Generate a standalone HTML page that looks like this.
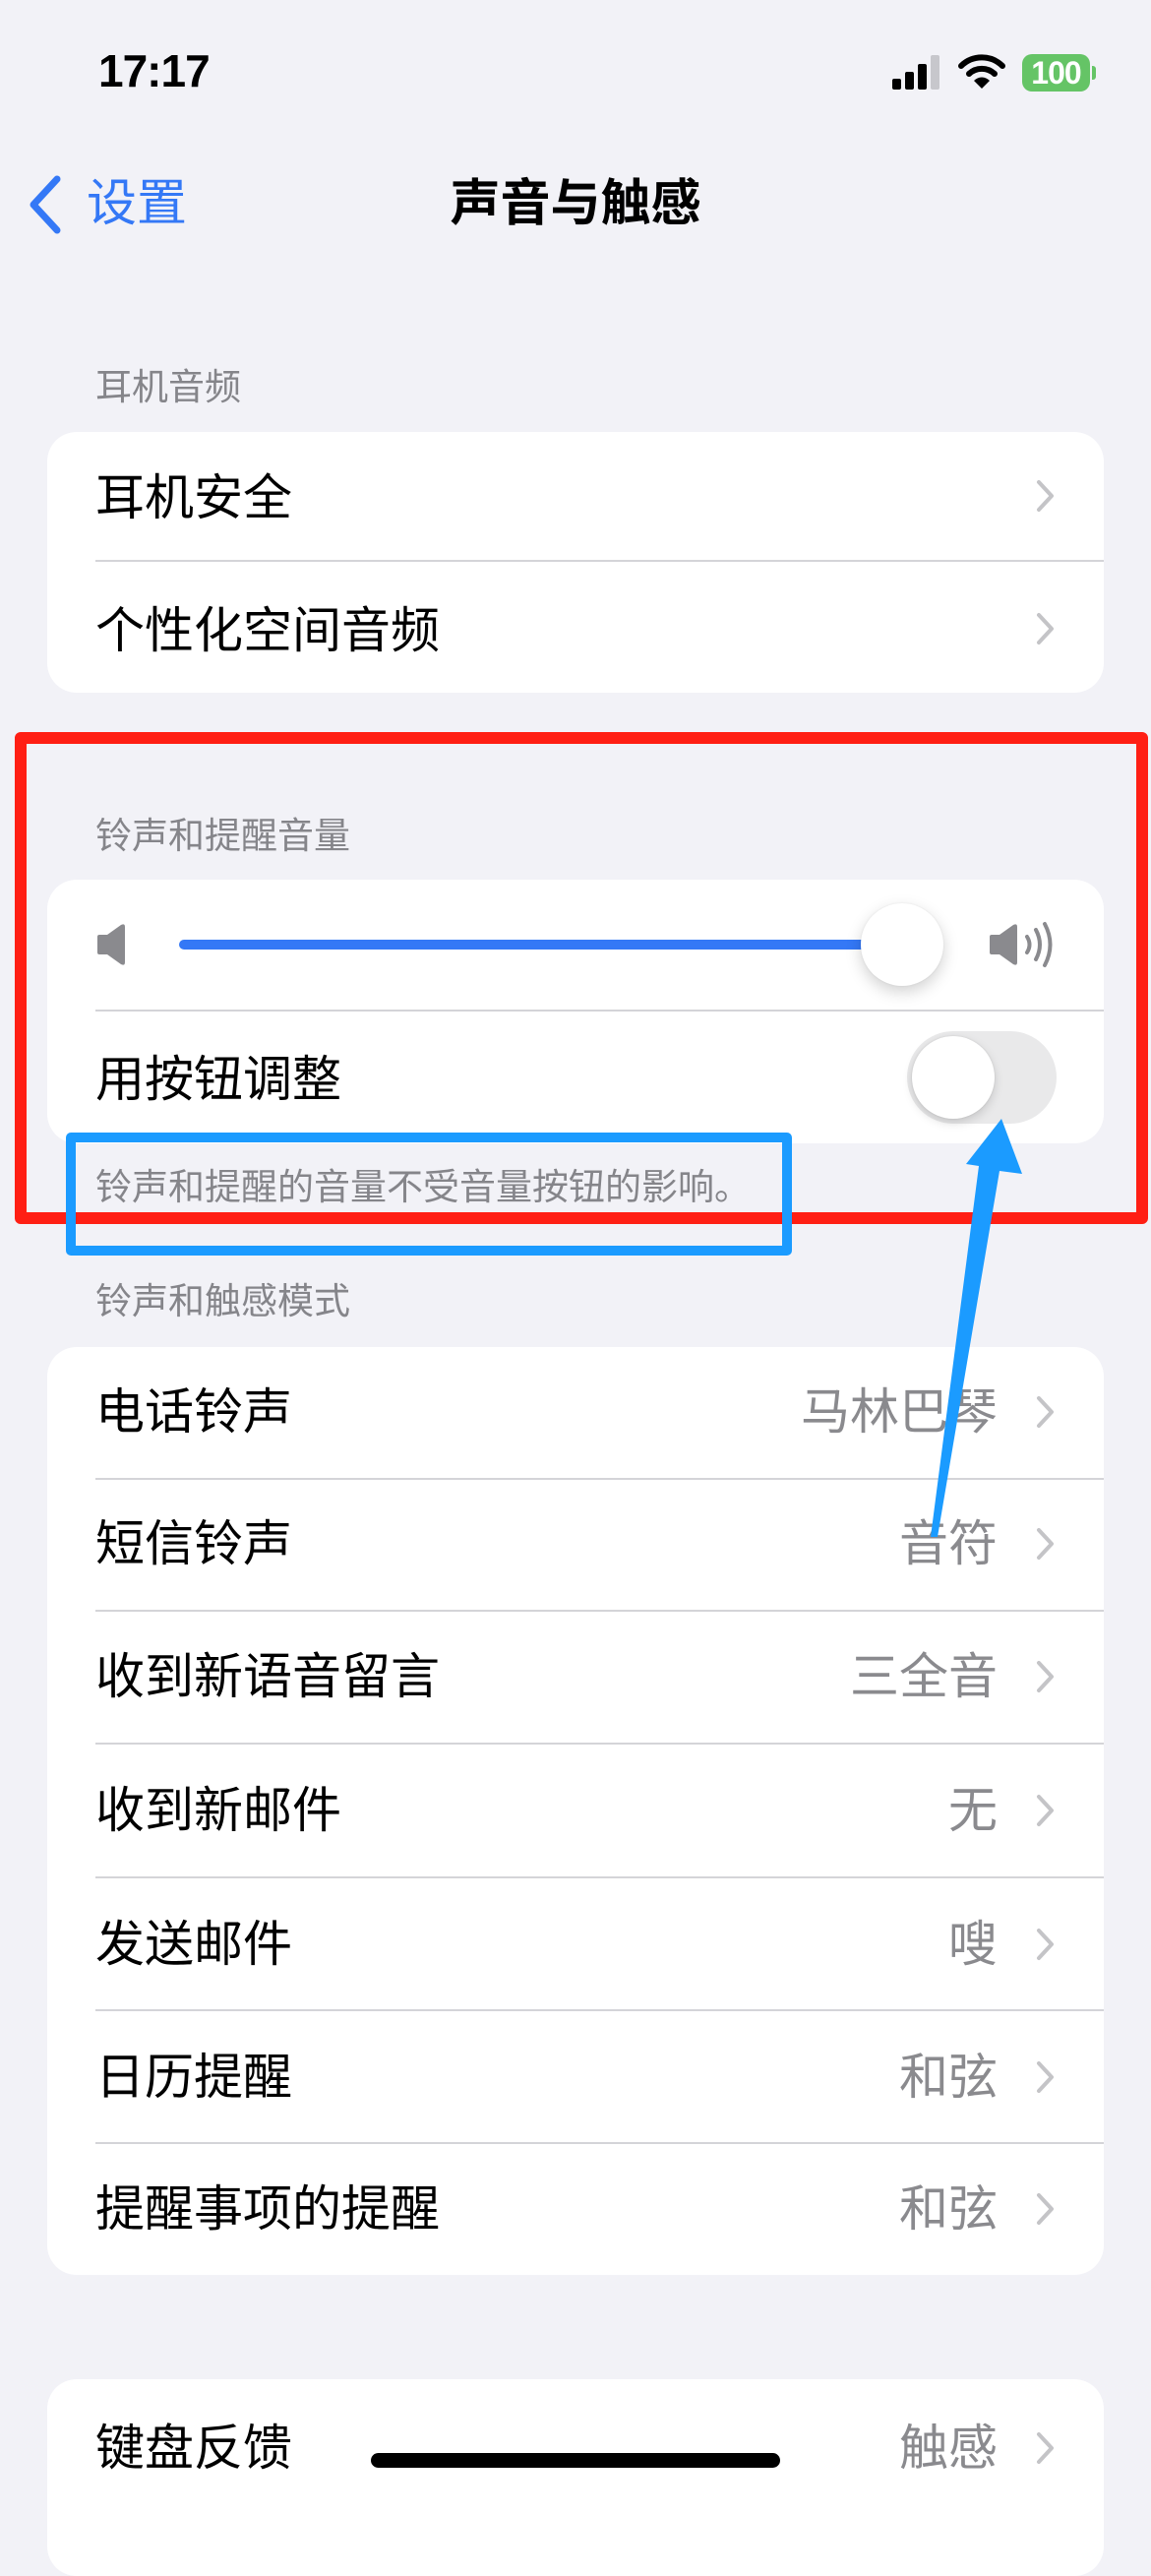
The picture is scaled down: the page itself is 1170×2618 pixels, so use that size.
<!DOCTYPE html>
<html><head><meta charset="utf-8"><style>
*{margin:0;padding:0;box-sizing:border-box}
body{width:1170px;height:2532px;background:#f2f2f7;position:relative;overflow:hidden;font-family:"Liberation Sans","Noto Sans CJK SC",sans-serif;}
.a{position:absolute}
.card{position:absolute;left:48px;width:1074px;background:#fff;border-radius:30px}
.t{position:absolute;left:97px;font-size:50px;color:#000;line-height:60px;white-space:nowrap}
.h{position:absolute;left:97px;font-size:37px;color:#85858a;line-height:46px;white-space:nowrap}
.v{position:absolute;right:156px;font-size:50px;color:#8a8a8e;line-height:60px;white-space:nowrap}
.sep{position:absolute;left:97px;right:48px;height:2px;background:#d4d4d8}
.chev{position:absolute;left:1051px;width:24px;height:36px}
</style></head><body>
<!-- status bar -->
<div class="a" style="left:100px;top:44px;font-size:46px;font-weight:bold;line-height:56px;letter-spacing:-1px">17:17</div>
<svg class="a" style="left:905px;top:54px" width="52" height="38" viewBox="0 0 52 38">
<rect x="2" y="26" width="9" height="11" rx="2" fill="#000"/>
<rect x="15" y="19" width="9" height="18" rx="2" fill="#000"/>
<rect x="28" y="11" width="9" height="26" rx="2" fill="#000"/>
<rect x="41" y="2" width="9" height="35" rx="2" fill="#c7c7cc"/>
</svg>
<svg class="a" style="left:974px;top:54px" width="48" height="38" viewBox="0 0 48 38">
<path d="M3 13 A30 30 0 0 1 45 13" stroke="#000" stroke-width="6" fill="none" stroke-linecap="round"/>
<path d="M11 21 A19 19 0 0 1 37 21" stroke="#000" stroke-width="6" fill="none" stroke-linecap="round"/>
<path d="M24 36 L16 28 A11 11 0 0 1 32 28 Z" fill="#000"/>
</svg>
<div class="a" style="left:1039px;top:55px;width:69px;height:38px;background:#65c466;border-radius:10px;color:#fff;font-weight:bold;font-size:32px;line-height:38px;text-align:center;letter-spacing:-1px">100</div>
<div class="a" style="left:1110px;top:67px;width:4px;height:14px;background:#65c466;border-radius:0 3px 3px 0"></div>
<!-- nav -->
<svg class="a" style="left:26px;top:178px" width="40" height="60" viewBox="0 0 40 60"><path d="M32 4 L8 30 L32 56" stroke="#3478f6" stroke-width="7" fill="none" stroke-linecap="round" stroke-linejoin="round"/></svg>
<div class="a" style="left:88px;top:176px;font-size:51px;color:#3478f6;line-height:62px">设置</div>
<div class="a" style="left:0;width:1170px;top:176px;text-align:center;font-size:51px;font-weight:bold;line-height:62px;padding-left:0">声音与触感</div>
<!-- section 1 -->
<div class="h" style="top:371px">耳机音频</div>
<div class="card" style="top:439px;height:265px"></div>
<div class="t" style="top:476px">耳机安全</div>
<div class="sep" style="top:569px"></div>
<div class="t" style="top:611px">个性化空间音频</div>
<svg class="chev" style="top:486px" viewBox="0 0 24 36"><path d="M5 4 L18 18 L5 32" stroke="#c4c4c7" stroke-width="4" fill="none" stroke-linecap="round" stroke-linejoin="round"/></svg>
<svg class="chev" style="top:621px" viewBox="0 0 24 36"><path d="M5 4 L18 18 L5 32" stroke="#c4c4c7" stroke-width="4" fill="none" stroke-linecap="round" stroke-linejoin="round"/></svg>
<!-- section 2 -->
<div class="h" style="top:827px">铃声和提醒音量</div>
<div class="card" style="top:894px;height:268px"></div>
<svg class="a" style="left:97px;top:938px" width="32" height="44" viewBox="0 0 32 44"><path d="M2 14 Q2 12 4 12 L12 12 L26 2 Q30 0 30 4 L30 40 Q30 44 26 42 L12 32 L4 32 Q2 32 2 30 Z" fill="#8a8a8e"/></svg>
<div class="a" style="left:182px;top:955px;width:740px;height:10px;background:#3478f6;border-radius:5px"></div>
<div class="a" style="left:875px;top:918px;width:84px;height:84px;background:#fff;border-radius:50%;box-shadow:0 6px 16px rgba(0,0,0,0.18),0 0 2px rgba(0,0,0,0.08)"></div>
<svg class="a" style="left:1004px;top:936px" width="70" height="48" viewBox="0 0 70 48"><path d="M2 16 Q2 14 4 14 L12 14 L26 4 Q30 2 30 6 L30 42 Q30 46 26 44 L12 34 L4 34 Q2 34 2 32 Z" fill="#8a8a8e"/><path d="M40 16 Q45 24 40 32" stroke="#8a8a8e" stroke-width="4" fill="none" stroke-linecap="round"/><path d="M49 9 Q57 24 49 39" stroke="#8a8a8e" stroke-width="4" fill="none" stroke-linecap="round"/><path d="M58 3 Q69 24 58 45" stroke="#8a8a8e" stroke-width="4" fill="none" stroke-linecap="round"/></svg>
<div class="sep" style="top:1026px"></div>
<div class="t" style="top:1067px">用按钮调整</div>
<div class="a" style="left:922px;top:1048px;width:152px;height:94px;background:#e9e9ea;border-radius:47px"></div>
<div class="a" style="left:927px;top:1053px;width:84px;height:84px;background:#fff;border-radius:50%;box-shadow:0 4px 10px rgba(0,0,0,0.15),0 0 2px rgba(0,0,0,0.1)"></div>
<div class="h" style="top:1184px">铃声和提醒的音量不受音量按钮的影响。</div>
<!-- red box -->
<div class="a" style="left:15px;top:744px;width:1152px;height:500px;border:12px solid #ff1f14;border-radius:6px"></div>
<!-- blue box -->
<div class="a" style="left:67px;top:1151px;width:738px;height:125px;border:10px solid #1b9bff;border-radius:5px"></div>
<!-- section 3 -->
<div class="h" style="top:1300px">铃声和触感模式</div>
<div class="card" style="top:1369px;height:943px"></div>
<div class="t" style="top:1405px">电话铃声</div><div class="v" style="top:1405px">马林巴琴</div>
<div class="sep" style="top:1502px"></div>
<div class="t" style="top:1539px">短信铃声</div><div class="v" style="top:1539px">音符</div>
<div class="sep" style="top:1636px"></div>
<div class="t" style="top:1674px">收到新语音留言</div><div class="v" style="top:1674px">三全音</div>
<div class="sep" style="top:1771px"></div>
<div class="t" style="top:1810px">收到新邮件</div><div class="v" style="top:1810px">无</div>
<div class="sep" style="top:1907px"></div>
<div class="t" style="top:1946px">发送邮件</div><div class="v" style="top:1946px">嗖</div>
<div class="sep" style="top:2042px"></div>
<div class="t" style="top:2081px">日历提醒</div><div class="v" style="top:2081px">和弦</div>
<div class="sep" style="top:2177px"></div>
<div class="t" style="top:2215px">提醒事项的提醒</div><div class="v" style="top:2215px">和弦</div>
<svg class="chev" style="top:1417px" viewBox="0 0 24 36"><path d="M5 4 L18 18 L5 32" stroke="#c4c4c7" stroke-width="4" fill="none" stroke-linecap="round" stroke-linejoin="round"/></svg>
<svg class="chev" style="top:1551px" viewBox="0 0 24 36"><path d="M5 4 L18 18 L5 32" stroke="#c4c4c7" stroke-width="4" fill="none" stroke-linecap="round" stroke-linejoin="round"/></svg>
<svg class="chev" style="top:1686px" viewBox="0 0 24 36"><path d="M5 4 L18 18 L5 32" stroke="#c4c4c7" stroke-width="4" fill="none" stroke-linecap="round" stroke-linejoin="round"/></svg>
<svg class="chev" style="top:1822px" viewBox="0 0 24 36"><path d="M5 4 L18 18 L5 32" stroke="#c4c4c7" stroke-width="4" fill="none" stroke-linecap="round" stroke-linejoin="round"/></svg>
<svg class="chev" style="top:1958px" viewBox="0 0 24 36"><path d="M5 4 L18 18 L5 32" stroke="#c4c4c7" stroke-width="4" fill="none" stroke-linecap="round" stroke-linejoin="round"/></svg>
<svg class="chev" style="top:2093px" viewBox="0 0 24 36"><path d="M5 4 L18 18 L5 32" stroke="#c4c4c7" stroke-width="4" fill="none" stroke-linecap="round" stroke-linejoin="round"/></svg>
<svg class="chev" style="top:2227px" viewBox="0 0 24 36"><path d="M5 4 L18 18 L5 32" stroke="#c4c4c7" stroke-width="4" fill="none" stroke-linecap="round" stroke-linejoin="round"/></svg>
<!-- section 4 -->
<div class="card" style="top:2418px;height:200px"></div>
<div class="t" style="top:2458px">键盘反馈</div><div class="v" style="top:2458px">触感</div>
<svg class="chev" style="top:2470px" viewBox="0 0 24 36"><path d="M5 4 L18 18 L5 32" stroke="#c4c4c7" stroke-width="4" fill="none" stroke-linecap="round" stroke-linejoin="round"/></svg>
<div class="a" style="left:377px;top:2493px;width:416px;height:15px;background:#000;border-radius:8px"></div>
<!-- arrow -->
<svg class="a" style="left:0;top:0" width="1170" height="2532" viewBox="0 0 1170 2532">
<path d="M1018 1137 L982 1183 L995 1185 L946 1562 L953 1562 L1016 1190 L1039 1193 Z" fill="#1b9bff"/>
</svg>
</body></html>
